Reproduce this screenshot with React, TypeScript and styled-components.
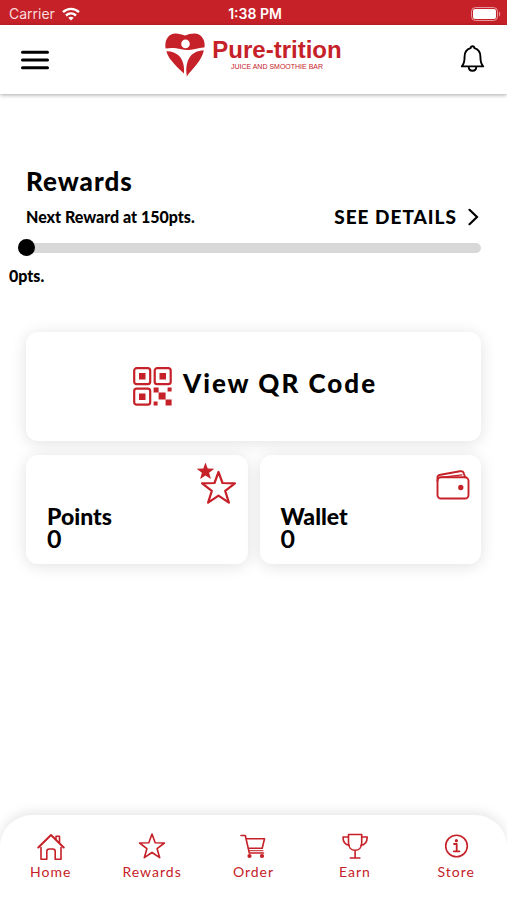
import React, { useState } from "react";
import styled, { createGlobalStyle, css } from "styled-components";

const RED = "#c62128";

const GlobalStyle = createGlobalStyle`
  *, *::before, *::after { box-sizing: border-box; }
  body {
    margin: 0;
    background: #fff;
    color: #000;
    font-family: Lato, "Noto Sans", sans-serif;
  }
  button { font: inherit; color: inherit; background: none; border: 0; padding: 0; cursor: pointer; }
  a { color: inherit; text-decoration: none; }
  h1, h2, p { margin: 0; }
  svg { display: block; }
`;

const Screen = styled.div`
  display: flex;
  flex-direction: column;
  min-height: 100vh;
  overflow: hidden;
`;

const StatusBar = styled.div`
  display: grid;
  grid-template-columns: 1fr auto 1fr;
  align-items: center;
  height: 25px;
  padding: 2px 6px 0 9px;
  background: ${RED};
  color: #fff;
  font-family: Inter, sans-serif;
  font-size: 14px;
  line-height: 16px;
`;

const Carrier = styled.span`
  display: flex;
  align-items: center;
  gap: 7px;
  color: #f9dcdd;
`;

const Clock = styled.time`
  font-weight: 600;
`;

const Battery = styled.span`
  justify-self: end;
`;

const Header = styled.header`
  display: grid;
  grid-template-columns: 1fr auto 1fr;
  align-items: center;
  height: 69px;
  padding: 0 21px;
  background: #fff;
  box-shadow: 0 1px 4px rgba(0, 0, 0, 0.35);
`;

const IconButton = styled.button<{ $end?: boolean }>`
  justify-self: ${(p) => (p.$end ? "end" : "start")};
`;

const Brand = styled.a`
  display: flex;
  align-items: flex-start;
  gap: 7px;
  padding-bottom: 10px;
  color: ${RED};
  font-family: "Liberation Sans", Arial, sans-serif;
`;

const BrandText = styled.span`
  display: flex;
  flex-direction: column;
  align-items: center;
  padding-top: 5px;
`;

const BrandName = styled.span`
  font-size: 24px;
  line-height: 24px;
  font-weight: 700;
`;

const Tagline = styled.span`
  font-size: 7px;
  line-height: 10px;
`;

const Main = styled.main`
  flex: 1;
  padding: 71px 26px 24px;
`;

const Title = styled.h1`
  font-size: 26px;
  line-height: 32px;
  font-weight: 900;
  letter-spacing: 1px;
`;

const Row = styled.div`
  display: flex;
  align-items: center;
  justify-content: space-between;
  margin-top: 6px;
  line-height: 28px;
`;

const NextReward = styled.label`
  font-size: 16px;
  font-weight: 900;
`;

const DetailsLink = styled.a`
  display: flex;
  align-items: center;
  gap: 11px;
  padding-right: 2px;
  font-size: 19px;
  font-weight: 900;
  letter-spacing: 1px;
`;

const Slider = styled.input`
  display: block;
  appearance: none;
  width: calc(100% + 8px);
  height: 18px;
  margin: 8px 0 0 -8px;
  background: transparent;

  &::-webkit-slider-runnable-track {
    height: 10px;
    border-radius: 5px;
    background: #d8d8d8;
  }
  &::-webkit-slider-thumb {
    appearance: none;
    width: 17px;
    height: 17px;
    margin-top: -4px;
    border-radius: 50%;
    background: #000;
  }
`;

const SliderValue = styled.output`
  display: block;
  margin: 9px 0 0 -17px;
  font-size: 16px;
  line-height: 20px;
  font-weight: 900;
`;

const Cards = styled.div`
  display: grid;
  grid-template-columns: 1fr 1fr;
  gap: 14px 12px;
  margin-top: 46px;
`;

const card = css`
  min-height: 109px;
  border-radius: 12px;
  background: #fff;
  box-shadow: 0 2px 16px rgba(0, 0, 0, 0.12);
`;

const QrCard = styled.button`
  ${card}
  grid-column: 1 / -1;
  display: flex;
  align-items: center;
  justify-content: center;
  gap: 11px;
  padding-left: 3px;
  font-size: 26px;
  line-height: 32px;
  font-weight: 900;
  letter-spacing: 2px;
`;

const QrLabel = styled.span`
  padding-bottom: 8px;
`;

const StatCard = styled.button`
  ${card}
  display: flex;
  align-items: flex-start;
  justify-content: space-between;
  padding: 7px 11px 15px 21px;
  text-align: left;
`;

const Stat = styled.span`
  display: flex;
  flex-direction: column;
  align-self: flex-end;
`;

const StatName = styled.span`
  font-size: 23px;
  line-height: 22px;
  font-weight: 900;
`;

const StatValue = styled.span`
  font-size: 25px;
  line-height: 22px;
  font-weight: 700;
`;

const StatIcon = styled.span<{ $drop?: boolean }>`
  padding-top: ${(p) => (p.$drop ? 8 : 0)}px;
`;

const TabBar = styled.nav`
  display: grid;
  grid-template-columns: repeat(5, 1fr);
  height: 85px;
  padding-top: 17px;
  border-radius: 32px 32px 0 0;
  background: #fff;
  box-shadow: 0 -3px 12px rgba(0, 0, 0, 0.1);
`;

const Tab = styled.a`
  display: flex;
  flex-direction: column;
  align-items: center;
  gap: 2px;
  color: ${RED};
  font-size: 14px;
  line-height: 20px;
  letter-spacing: 1px;
`;

const WifiIcon = () => (
  <svg width="18" height="14" viewBox="0 0 18 14" fill="none" stroke="#fff" strokeWidth="2.4" aria-hidden="true">
    <path d="M1 5.2C5.600 .7 12.400 .7 17 5.200" />
    <path d="M4 8.500c2.900-2.700 7.100-2.700 10 0" />
    <path d="M6.300 10.700c1.600-1.400 3.800-1.400 5.400 0L9 13.500z" fill="#fff" stroke="none" />
  </svg>
);

const BatteryIcon = () => (
  <svg width="30" height="14" viewBox="0 0 30 14" aria-hidden="true">
    <rect x="0.500" y="0.500" width="26" height="13" rx="4" fill="none" stroke="#e79a9d" />
    <rect x="2" y="2" width="23" height="10" rx="2" fill="#fff" />
    <path d="M28 4.500c1.600.6 1.600 4.400 0 5z" fill="#e79a9d" />
  </svg>
);

const MenuIcon = () => (
  <svg width="28" height="20" viewBox="0 0 28 20" stroke="#000" strokeWidth="3" strokeLinecap="round" aria-hidden="true">
    <path d="M1.500 2.200h25M1.500 10h25M1.500 17.700h25" />
  </svg>
);

const BellIcon = () => (
  <svg width="27" height="30" viewBox="0 0 27 30" fill="none" stroke="#000" strokeWidth="1.900" strokeLinejoin="round" aria-hidden="true">
    <path d="M11.600 3.200c0-2.700 3.800-2.700 3.800 0 4.200 1.200 6 4.400 6 8.400 0 5.700.5 7.600 2.800 9.800H2.800c2.300-2.200 2.800-4.100 2.800-9.800 0-4 1.800-7.200 6-8.400z" />
    <path d="M9.700 21.500c0 5.700 7.600 5.700 7.600 0" />
  </svg>
);

const HeartLogo = () => (
  <svg width="40" height="44" viewBox="0 0 40 44" fill={RED} aria-hidden="true">
    <path
      fillRule="evenodd"
      d="M.6 15.400C-.8 7.400 3.400.6 10.200.4c3.800-.1 6.400 1 9.800 2C23.400 1.200 26 .3 29.800.4c6.800.2 11 7 9.600 14.200C34 14.200 29 17.400 22.600 17c-5 0-7.600-1.200-11.600-1.800-4.200-.6-7.200-.2-10.400.2zM20.500 6.600a4.300 4.300 0 1 0 0 8.600 4.300 4.300 0 0 0 0-8.600z"
    />
    <path d="M1.400 18.200c4.600-.2 9.600 1.400 12.800 4.800 4.200 4.600 5.300 11 4.800 17.400C14 36.200 9.800 32 6.400 27.600 4 24.600 2.200 21.600 1.400 18.200z" />
    <path d="M38.800 17.200c-5 .2-10.200 2-13.400 6-3.700 5-5 12-3.500 20.200 1.500-2.600 3.500-4.600 5.500-6.900 5.200-6 10-12 11.400-19.300z" />
  </svg>
);

const ChevronIcon = () => (
  <svg width="11" height="18" viewBox="0 0 11 18" fill="none" stroke="#000" strokeWidth="2.200" strokeLinecap="round" aria-hidden="true">
    <path d="M1.500 1.800 9 9l-7.500 7.200" />
  </svg>
);

const QrIcon = () => (
  <svg width="39" height="39" viewBox="0 0 39 39" fill={RED} aria-hidden="true">
    <g fill="none" stroke={RED} strokeWidth="2.200">
      <rect x="1.200" y="1.200" width="16" height="16" rx="2.500" />
      <rect x="21.700" y="1.200" width="16" height="16" rx="2.500" />
      <rect x="1.200" y="21.700" width="16" height="16" rx="2.500" />
    </g>
    <path d="M6 6h6.500v6.500H6zM26.500 6H33v6.500h-6.500zM6 26.500h6.500V33H6z" />
    <path d="M20.600 20.600h5v5h-5zM25.600 25.600h7v7h-7zM32.600 32.600h6v6h-6zM34.600 20.600h4v4h-4zM20.600 34.600h4v4h-4z" />
  </svg>
);

const PointsIcon = () => (
  <svg width="41" height="42" viewBox="0 0 41 42" aria-hidden="true">
    <path d="m9.500 .5 2.200 6.100 6.600.2-5.200 4 1.800 6.300-5.400-3.600-5.400 3.600 1.800-6.300-5.200-4 6.600-.2z" fill={RED} />
    <path
      d="m22.500 10 4 11 12.400.3-9.700 7.600 3.700 11.800-10.400-7-10.400 7 3.700-11.800-9.700-7.600 12.400-.3z"
      fill="none"
      stroke={RED}
      strokeWidth="2.200"
      strokeLinejoin="round"
    />
  </svg>
);

const WalletIcon = () => (
  <svg width="34" height="30" viewBox="0 0 34 30" fill="none" stroke={RED} strokeWidth="1.900" strokeLinecap="round" strokeLinejoin="round" aria-hidden="true">
    <path d="M1.500 11V7.500c0-1.700 1.300-2.500 3-2.700l19.500-3.600c2.200-.4 3.500.6 4 2.600l1 3.500" />
    <path d="M5 7.300 26 4.800" strokeWidth="1.200" />
    <rect x="1.500" y="7.300" width="31" height="21.200" rx="3.500" />
    <circle cx="24.800" cy="17.500" r="1.700" fill={RED} />
  </svg>
);

const tabStroke = {
  width: 28,
  height: 28,
  viewBox: "0 0 28 28",
  fill: "none",
  stroke: RED,
  strokeWidth: 1.6,
  strokeLinecap: "round",
  strokeLinejoin: "round",
  "aria-hidden": true,
} as const;

const HomeIcon = () => (
  <svg {...tabStroke}>
    <path d="M4 15.500v11.700h5.800v-7.700c0-1.700.8-2.500 2.400-2.500h3.600c1.600 0 2.400.8 2.400 2.500v7.700H24V15.500" />
    <path d="M1.300 15.500 14 3l12.700 12.500" strokeWidth="2" />
    <path d="M19 7V4.200h3.500v6.500" />
  </svg>
);

const StarIcon = () => (
  <svg {...tabStroke}>
    <path d="m14 2 3.200 8.700 9.200.3-7.300 5.700 2.600 9L14 20.500 6.300 25.700l2.600-9L1.600 11l9.200-.3z" />
  </svg>
);

const CartIcon = () => (
  <svg {...tabStroke}>
    <path d="M2 3.500h4.300l4 17.500h14.200M7.200 6.700h18.300l-2.300 9.600H9.300" />
    <path d="M10 18.700h14" strokeWidth="1" />
    <circle cx="10.500" cy="24" r="1.300" fill={RED} />
    <circle cx="23" cy="24" r="1.300" fill={RED} />
  </svg>
);

const TrophyIcon = () => (
  <svg {...tabStroke}>
    <path d="M7.500 2.500h13.200v8.200c0 4.400-2.600 7.600-6.600 7.600s-6.600-3.200-6.600-7.600zM14.100 18.500v7M9.300 26h9.600" />
    <path d="M7.300 5H2c0 4.700 2.300 7.800 6.200 8.300M20.900 5h5.300c0 4.700-2.300 7.800-6.200 8.300" />
  </svg>
);

const InfoIcon = () => (
  <svg {...tabStroke}>
    <circle cx="14.500" cy="14" r="10.800" />
    <path d="M12 12h2.700v7.300M11.800 19.300h5.700" strokeWidth="1.800" />
    <circle cx="14.400" cy="8.700" r=".8" fill={RED} />
  </svg>
);

const tabs = [
  { name: "Home", Icon: HomeIcon },
  { name: "Rewards", Icon: StarIcon },
  { name: "Order", Icon: CartIcon },
  { name: "Earn", Icon: TrophyIcon },
  { name: "Store", Icon: InfoIcon },
];

export default function App() {
  const [points, setPoints] = useState(0);

  return (
    <Screen>
      <GlobalStyle />
      <StatusBar>
        <Carrier>
          Carrier
          <WifiIcon />
        </Carrier>
        <Clock>1:38 PM</Clock>
        <Battery>
          <BatteryIcon />
        </Battery>
      </StatusBar>
      <Header>
        <IconButton aria-label="Menu">
          <MenuIcon />
        </IconButton>
        <Brand href="#">
          <HeartLogo />
          <BrandText>
            <BrandName>Pure-trition</BrandName>
            <Tagline>JUICE AND SMOOTHIE BAR</Tagline>
          </BrandText>
        </Brand>
        <IconButton $end aria-label="Notifications">
          <BellIcon />
        </IconButton>
      </Header>
      <Main>
        <Title>Rewards</Title>
        <Row>
          <NextReward htmlFor="progress">Next Reward at 150pts.</NextReward>
          <DetailsLink href="#details">
            SEE DETAILS
            <ChevronIcon />
          </DetailsLink>
        </Row>
        <Slider
          id="progress"
          type="range"
          min={0}
          max={150}
          value={points}
          onChange={(e) => setPoints(Number(e.target.value))}
        />
        <SliderValue htmlFor="progress">{points}pts.</SliderValue>
        <Cards>
          <QrCard>
            <QrIcon />
            <QrLabel>View QR Code</QrLabel>
          </QrCard>
          <StatCard>
            <Stat>
              <StatName>Points</StatName>
              <StatValue>0</StatValue>
            </Stat>
            <StatIcon>
              <PointsIcon />
            </StatIcon>
          </StatCard>
          <StatCard>
            <Stat>
              <StatName>Wallet</StatName>
              <StatValue>0</StatValue>
            </Stat>
            <StatIcon $drop>
              <WalletIcon />
            </StatIcon>
          </StatCard>
        </Cards>
      </Main>
      <TabBar>
        {tabs.map(({ name, Icon }) => (
          <Tab key={name} href={`#${name.toLowerCase()}`}>
            <Icon />
            {name}
          </Tab>
        ))}
      </TabBar>
    </Screen>
  );
}
